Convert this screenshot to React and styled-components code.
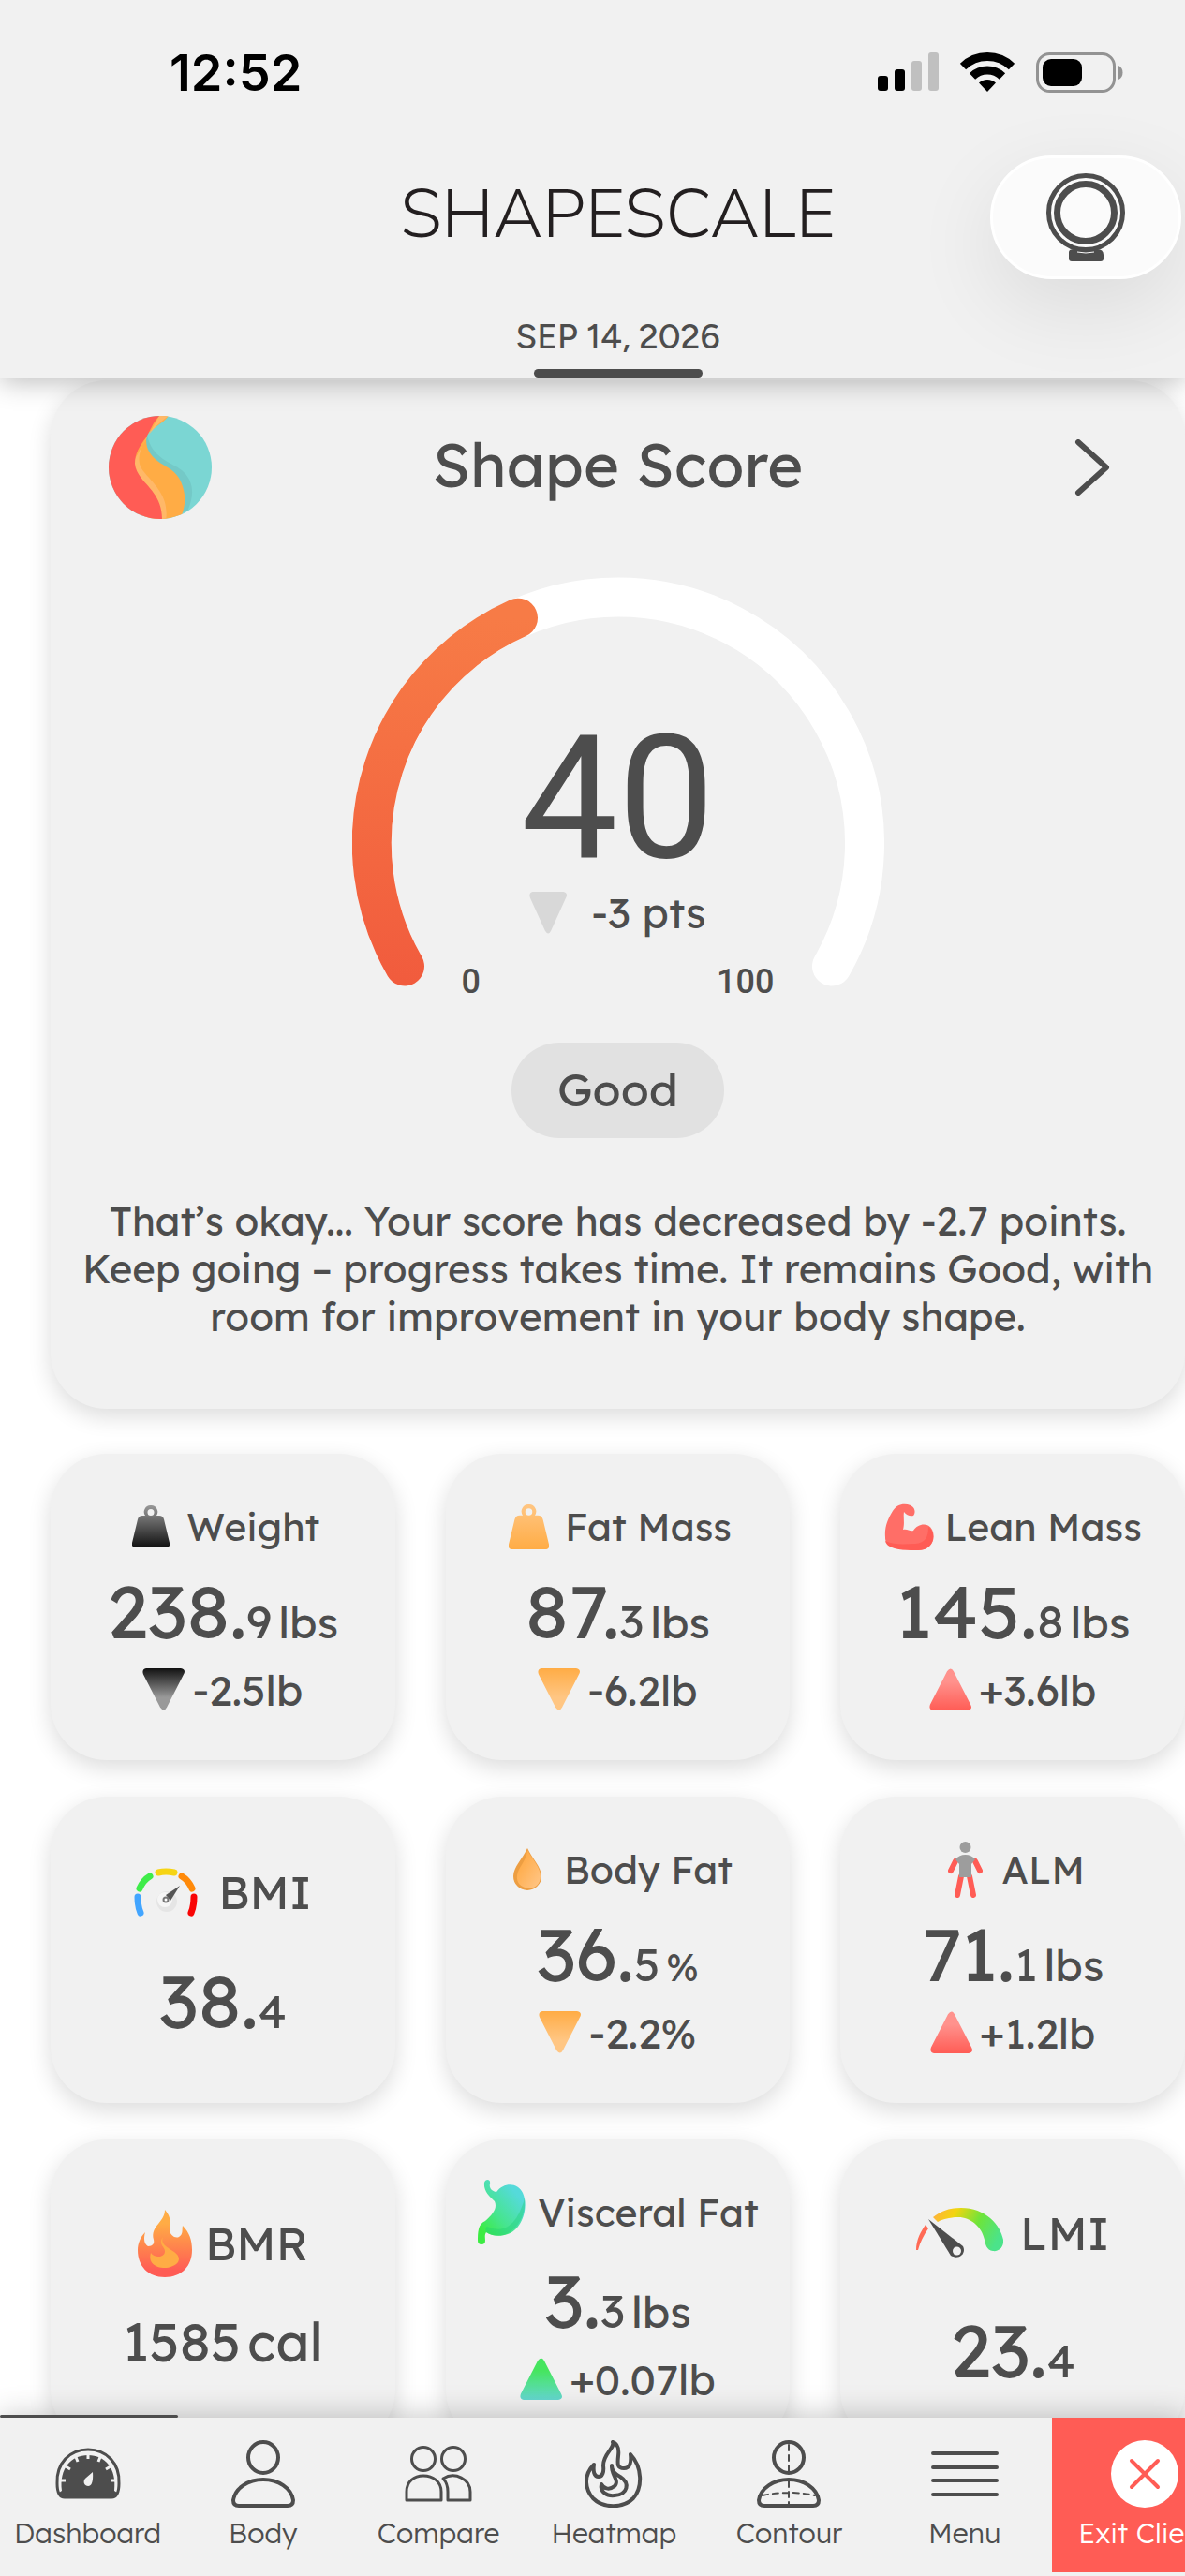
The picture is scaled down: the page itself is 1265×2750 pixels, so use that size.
import React from "react";
import styled, { createGlobalStyle } from "styled-components";

const ink = "#4d4d4d";
const surface = "#f1f1f1";
const coral = "#ff5c55";

const GlobalStyle = createGlobalStyle`
  *, *::before, *::after { box-sizing: border-box; }
  html, body { margin: 0; background: #fff; }
  body {
    color: ${ink};
    font-family: Lexend, Inter, "Open Sans", sans-serif;
    font-weight: 400;
  }
  button { font: inherit; color: inherit; border: 0; padding: 0; background: none; cursor: pointer; }
  h1, h2, h3, p { margin: 0; font-weight: inherit; }
  svg { display: block; flex: none; }
`;

const Screen = styled.div`
  display: flex;
  flex-direction: column;
  height: 100vh;
  overflow: hidden;
`;

const Header = styled.header`
  position: relative;
  z-index: 2;
  flex: none;
  background: ${surface};
  box-shadow: 0 4px 28px rgba(0, 0, 0, 0.28);
`;

const StatusBar = styled.div`
  display: flex;
  align-items: center;
  justify-content: space-between;
  height: 154px;
  padding: 0 66px 0 181px;
  color: #000;
`;

const Clock = styled.time`
  font-family: Inter, sans-serif;
  font-size: 54px;
  font-weight: 600;
`;

const StatusIcons = styled.div`
  display: flex;
  align-items: center;
  gap: 23px;
`;

const TitleRow = styled.div`
  display: grid;
  grid-template-columns: 1fr auto 1fr;
  align-items: center;
  height: 150px;
  padding-left: 54px;
`;

const AppTitle = styled.h1`
  grid-column: 2;
  font-family: "Nunito Sans", Inter, sans-serif;
  font-size: 73px;
  font-weight: 300;
  line-height: 80px;
  color: #231f20;
`;

const DeviceButton = styled.button`
  display: grid;
  place-items: center;
  justify-self: end;
  width: 204px;
  height: 132px;
  margin: 6px 4px 0 0;
  border: 3px solid #fff;
  border-radius: 66px;
  background: #fbfbfb;
  box-shadow: 0 28px 90px rgba(0, 0, 0, 0.09);
`;

const DateTab = styled.div`
  display: flex;
  flex-direction: column;
  align-items: center;
  gap: 17px;
  padding: 37px 0 0 54px;
  font-family: Figtree, Inter, sans-serif;
  font-size: 37px;
  font-weight: 500;
  line-height: 36px;
`;

const TabMarker = styled.span`
  width: 180px;
  height: 9px;
  border-radius: 5px;
  background: ${ink};
`;

const Content = styled.main`
  flex: 1;
  min-height: 0;
  overflow: hidden;
  padding: 3px 0 0 54px;
`;

const Panel = styled.section`
  border-radius: 60px;
  background: ${surface};
  box-shadow: 0 8px 24px rgba(0, 0, 0, 0.14);
`;

const ScoreCard = styled(Panel)`
  display: flex;
  flex-direction: column;
  align-items: center;
  padding: 38px 28px 71px;
  margin-bottom: 48px;
`;

const ScoreHeader = styled.div`
  display: grid;
  grid-template-columns: 1fr auto 1fr;
  align-items: center;
  align-self: stretch;
  height: 110px;
  padding: 0 34px;
  margin-bottom: 62px;
`;

const ScoreTitle = styled.h2`
  padding-bottom: 6px;
  font-size: 65px;
  line-height: 80px;
`;

const Chevron = styled.button`
  display: flex;
  justify-content: flex-end;
  justify-self: end;
  width: 110px;
  padding-right: 18px;
`;

const Gauge = styled.div`
  display: grid;
  justify-items: center;
  width: 568px;
  height: 452px;
  margin-bottom: 45px;

  & > * { grid-area: 1 / 1; }
`;

const GaugeReadout = styled.div`
  display: flex;
  flex-direction: column;
  align-items: center;
  justify-content: flex-end;
`;

const ScoreValue = styled.strong`
  font-family: Roboto, sans-serif;
  font-size: 184px;
  font-weight: 400;
  line-height: 178px;
`;

const ScoreDelta = styled.div`
  display: flex;
  align-items: center;
  gap: 26px;
  height: 50px;
  margin: 8px 0 29px;
  font-size: 45px;
`;

const GaugeRange = styled.div`
  display: flex;
  justify-content: space-between;
  width: 334px;
  font-family: Roboto, sans-serif;
  font-size: 36px;
  font-weight: 500;
  line-height: 40px;
`;

const Rating = styled.span`
  display: grid;
  place-items: center;
  width: 227px;
  height: 102px;
  padding-bottom: 4px;
  margin-bottom: 63px;
  border-radius: 51px;
  background: #e1e1e1;
  font-size: 49px;
`;

const Summary = styled.p`
  padding-bottom: 2px;
  font-size: 42px;
  line-height: 51px;
  text-align: center;
`;

const Metrics = styled.div`
  display: grid;
  grid-template-columns: repeat(3, 1fr);
  grid-auto-rows: 327px;
  gap: 39px 54px;
`;

const MetricCard = styled(Panel).attrs({ as: "article" })`
  display: flex;
  flex-direction: column;
  align-items: center;
  justify-content: center;
  gap: ${(p) => p.$gap}px;
  min-width: 0;
  padding-bottom: 3px;
  white-space: nowrap;
`;

const MetricLabel = styled.h3`
  display: flex;
  align-items: center;
  gap: ${(p) => p.$gap}px;
  height: ${(p) => p.$height}px;
  font-size: ${(p) => (p.$large ? 49 : 41)}px;
`;

const IconBox = styled.span`
  display: grid;
  place-items: center;
  min-width: ${(p) => (p.$large ? 0 : 53)}px;
`;

const Value = styled.p`
  display: flex;
  align-items: baseline;
  height: 77px;
  font-size: 79px;
  line-height: 77px;
`;

const Fraction = styled.span`
  font-size: 49px;
`;

const Unit = styled.span`
  margin-left: 7px;
  font-size: ${(p) => p.$size}px;
`;

const WholeValue = styled.span`
  font-size: 57px;
`;

const Delta = styled.p`
  display: flex;
  align-items: center;
  gap: 8px;
  height: 52px;
  font-size: 45px;
`;

const NavShell = styled.div`
  position: relative;
  z-index: 2;
  flex: none;
  padding-bottom: 4px;
  background: ${surface};
  box-shadow: 0 -2px 30px rgba(0, 0, 0, 0.22);
`;

const ActiveMarker = styled.span`
  position: absolute;
  left: 0;
  bottom: 100%;
  width: 15%;
  height: 3px;
  border-radius: 2px;
  background: ${ink};
`;

const Nav = styled.nav`
  display: flex;
  overflow: hidden;
`;

const NavItem = styled.button`
  display: flex;
  flex: 0 0 ${(p) => (p.$danger ? "15.6%" : "14.8%")};
  flex-direction: column;
  align-items: center;
  gap: 9px;
  height: 165px;
  padding-top: 24px;
  color: ${(p) => (p.$danger ? "#fff" : ink)};
  background: ${(p) => (p.$danger ? coral : "transparent")};
  font-size: 30px;
  font-weight: 300;
  line-height: 36px;
  white-space: nowrap;
`;

const ICON = { fill: "none", stroke: ink, strokeWidth: 4, strokeLinecap: "round", strokeLinejoin: "round" };

const SignalIcon = () => (
  <svg width="65" height="42" viewBox="0 0 65 42" aria-label="Signal">
    <rect x="0" y="25" width="11" height="16" rx="3" />
    <rect x="18" y="18" width="11" height="23" rx="3" />
    <rect x="36" y="9" width="11" height="32" rx="3" fill="#c0c0c0" />
    <rect x="54" y="0" width="11" height="41" rx="3" fill="#c0c0c0" />
  </svg>
);

const WifiIcon = () => (
  <svg width="58" height="42" viewBox="0 0 58 42" aria-label="Wi-Fi">
    <path d="M3 15A37.500 37.500 0 0 1 55 15M13 25.500A23 23 0 0 1 45 25.500" fill="none" stroke="#000" strokeWidth="9" />
    <path d="M20 32.600A13 13 0 0 1 38 32.600L29 42Z" />
  </svg>
);

const BatteryIcon = () => (
  <svg width="93" height="43" viewBox="0 0 93 43" aria-label="Battery">
    <rect x="1.500" y="1.500" width="82" height="40" rx="13" fill="none" stroke="#939393" strokeWidth="3" />
    <rect x="7" y="7" width="42" height="29" rx="9" />
    <path d="M88 14C94 16 94 27 88 29Z" fill="#939393" />
  </svg>
);

const DeviceIcon = () => (
  <svg width="84" height="94" viewBox="0 0 84 94" aria-hidden="true">
    <path d="M24 84Q24 81 30 81H54Q61 81 61 87V91Q61 94 58 94H27Q24 94 24 91Z" fill={ink} />
    <circle cx="42" cy="42" r="39.500" fill="#fbfbfb" stroke={ink} strokeWidth="5" />
    <circle cx="42" cy="42" r="30.500" fill="none" stroke={ink} strokeWidth="7" />
    <path d="M33 84Q42 86 51 84" fill="none" stroke="#fbfbfb" strokeWidth="1" />
  </svg>
);

const ShapeLogo = () => (
  <svg width="110" height="110" viewBox="0 0 110 110" aria-hidden="true">
    <clipPath id="logo-disc"><circle cx="55" cy="55" r="55" /></clipPath>
    <g clipPath="url(#logo-disc)">
      <rect width="110" height="110" fill="#7bd6d3" />
      <path d="M41 20C46 46 67 49 78 58C91 69 92 84 84 102L70 104L36 40Z" fill="#74c9c7" />
      <path d="M54 0H64C56 10 47 12 41 20C38 32 43 41 52 48C61 55 71 57 77 70C82 82 83 92 78 106L55 112L28 60V20Z" fill="#ffac45" />
      <path d="M54 0H64C50 10 45 17 40 24C33 36 30 48 35 56C43 69 66 83 61 112H40L20 60Z" fill="#ffb868" />
      <path d="M54 0C46 9 45 15 40 23C33 32 28 40 28 51C30 72 58 78 57 112H0V0Z" fill={coral} />
    </g>
  </svg>
);

const GaugeArc = () => (
  <svg width="568" height="438" viewBox="0 0 568 438" fill="none" strokeWidth="42" strokeLinecap="round" aria-hidden="true">
    <defs>
      <linearGradient id="gauge-fill" x1="0" y1="44" x2="0" y2="438" gradientUnits="userSpaceOnUse">
        <stop offset="0" stopColor="#f77b46" />
        <stop offset="1" stopColor="#f15b3d" />
      </linearGradient>
    </defs>
    <path d="M56 415.500A263 263 0 1 1 512 415.500" stroke="#fff" />
    <path d="M56 415.500A263 263 0 0 1 177 43.700" stroke="url(#gauge-fill)" />
  </svg>
);

const tones = {
  dark: ["#111", "#999"],
  amber: ["#ffac45", "#ffc683"],
  red: [coral, "#ff928d"],
  green: ["#64d8d0", "#46e55f"],
  grey: ["#d8d8d8", "#d8d8d8"],
};

const Triangle = ({ tone, up, width = 45 }) => {
  const id = `trend-${tone}`;
  return (
    <svg width={width} height="45" viewBox="0 0 45 41" preserveAspectRatio="none" aria-hidden="true">
      <linearGradient id={id} x1="0" y1="0" x2="0" y2="1">
        <stop offset="0" stopColor={tones[tone][0]} />
        <stop offset="0.7" stopColor={tones[tone][1]} />
      </linearGradient>
      <path
        d="M4 0H41Q47 1 44 6L26 38Q23 43 19 38L1 6Q-1 1 4 0Z"
        fill={`url(#${id})`}
        transform={up ? "matrix(1 0 0 -1 0 41)" : undefined}
      />
    </svg>
  );
};

const KettleIcon = ({ tone, size }) => (
  <svg width={size} height={size + 5} viewBox="0 0 40 45" preserveAspectRatio="none" aria-hidden="true">
    <linearGradient id={`kettle-${tone}`} x1="0" y1="1" x2="0" y2="0">
      <stop offset="0" stopColor={tones[tone][0]} />
      <stop offset="1" stopColor={tones[tone][1]} />
    </linearGradient>
    <path
      fillRule="evenodd"
      fill={`url(#kettle-${tone})`}
      d="M20 0A7 7 0 0 1 26 11H29Q33 11 34 15L40 40Q41 45 36 45H4Q-1 45 0 40L6 15Q7 11 11 11H14A7 7 0 0 1 20 0ZM20 4A3.500 3.500 0 1 0 20 11A3.500 3.500 0 1 0 20 4Z"
    />
  </svg>
);

const ArmIcon = () => (
  <svg width="53" height="50" viewBox="0 0 53 50" aria-hidden="true">
    <path d="M1 36C0 25 4 16 9 8C13 1 21-1 28 2C34 5 33 11 31 13C28 14 24 13 21 9C20 15 22 20 20 28C25 27 27 30 31 29C36 21 47 20 51 28C56 39 49 50 36 50C24 50 0 50 1 36Z" fill="#ff6e67" />
    <path d="M1 40C12 45 23 43 33 43C44 42 47 36 47 25C56 31 54 50 36 50C23 50 3 50 1 40Z" fill={coral} />
  </svg>
);

const BmiIcon = () => (
  <svg width="68" height="52" viewBox="0 0 68 52" fill="none" strokeWidth="7" strokeLinecap="round" aria-hidden="true">
    <path d="M4 31Q4 41 7 48" stroke="#42a5ff" />
    <path d="M6 22Q10 13 17 9" stroke="#3fec4a" />
    <path d="M26 5Q34 3 43 5" stroke="#f6d414" />
    <path d="M51 9Q58 13 62 22" stroke="#ff8a0a" />
    <path d="M64 31Q64 41 61 48" stroke="#f90505" />
    <circle cx="35" cy="36" r="11" fill="#e5e5e5" />
    <circle cx="33" cy="34" r="8" fill="#f6f6f6" />
    <path d="M49 19L34 29L39 35Z" fill="#555" />
    <circle cx="34" cy="34" r="2.500" fill="#fff" stroke="#777" strokeWidth="2" />
  </svg>
);

const DropIcon = () => (
  <svg width="30" height="45" viewBox="0 0 30 45" aria-hidden="true">
    <linearGradient id="drop" x1="0" y1="0" x2="1" y2="1">
      <stop offset="0.2" stopColor="#ffab47" />
      <stop offset="1" stopColor="#ffc78a" />
    </linearGradient>
    <path d="M15 0C20 11 30 20 30 30A15 15 0 0 1 0 30C0 20 10 11 15 0Z" fill="#ed9e42" />
    <path d="M15 2C21 13 29 21 29 30C29 38 23 43 17 43C8 42 3 37 4 29C5 20 14 14 15 2Z" fill="url(#drop)" />
  </svg>
);

const FigureIcon = () => (
  <svg width="37" height="60" viewBox="0 0 37 60" aria-hidden="true">
    <ellipse cx="18.500" cy="6" rx="6" ry="6" fill="#9d9d9d" />
    <path d="M8 21L3 31M29 21L34 31" stroke={coral} strokeWidth="6" strokeLinecap="round" />
    <path d="M14 37L10 57M23 37L27 57" stroke={coral} strokeWidth="6" strokeLinecap="round" />
    <path d="M8 19Q12 14 18.500 14T29 19L25 24V38H12V24Z" fill="#9d9d9d" />
  </svg>
);

const FlameIcon = () => (
  <svg width="58" height="72" viewBox="0 0 58 72" aria-hidden="true">
    <linearGradient id="flame" x1="0" y1="0" x2="0" y2="1">
      <stop offset="0.2" stopColor="#ffac45" />
      <stop offset="0.9" stopColor={coral} />
    </linearGradient>
    <path d="M29 0C37 9 34 15 34 21C34 27 40 31 44 29C49 26 47 21 48 17C55 24 58 32 58 43C58 60 47 72 29 72S0 60 0 43C0 36 3 29 8 24C6 31 7 37 11 39C16 39 18 36 17 32C13 17 29 14 29 0Z" fill="url(#flame)" />
    <path d="M27 29C24 36 30 39 39 45C51 54 39 62 29 62C18 62 11 56 14 46C17 51 28 52 29 45C30 40 21 37 27 29Z" fill="#ffac45" />
  </svg>
);

const StomachIcon = () => (
  <svg width="51" height="69" viewBox="0 0 51 69" aria-hidden="true">
    <linearGradient id="stomach" x1="0.8" y1="0.2" x2="0.1" y2="1">
      <stop offset="0" stopColor="#55dada" />
      <stop offset="0.5" stopColor="#46e58d" />
      <stop offset="0.85" stopColor="#3cec43" />
    </linearGradient>
    <path d="M7 3C8-1 14-1 13 4C12 8 14 12 20 13C28 2 43 3 48 14C55 30 47 53 32 58C24 61 14 60 9 56C7 59 8 62 8 65Q8 69 4 69Q0 69 0 65C0 57 0 47 8 44C17 36 21 30 18 23C12 17 6 12 7 3Z" fill="url(#stomach)" />
    <path d="M50 20C52 38 42 54 28 59C20 61 13 59 9 56C8 53 8 51 10 50C33 60 44 41 50 20Z" fill="#20cf76" opacity="0.4" />
  </svg>
);

const LmiIcon = () => (
  <svg width="93" height="53" viewBox="0 0 93 53" aria-hidden="true">
    <linearGradient id="lmi" x1="18" y1="0" x2="86" y2="36" gradientUnits="userSpaceOnUse">
      <stop offset="0" stopColor="#ffac45" />
      <stop offset="0.3" stopColor="#f3d50f" />
      <stop offset="0.65" stopColor="#6de43b" />
      <stop offset="1" stopColor="#4be38a" />
    </linearGradient>
    <path d="M0 45C0 34 5 25 10 18L13 22C8 29 4 37 2 45Z" fill="#ff6a55" />
    <path d="M18 10C28 2 38 0 48 0C74 0 90 18 93 34C94 43 87 47 82 46C75 45 74 39 73 34C70 20 58 10 45 10C36 10 28 12 23 15Z" fill="url(#lmi)" />
    <path d="M13 12L50 41C54 49 45 56 37 51Z" fill={ink} />
    <circle cx="43.500" cy="46" r="4.500" fill={surface} />
  </svg>
);

const DashboardIcon = () => (
  <svg width="72" height="72" viewBox="0 0 72 72" aria-hidden="true">
    <path d="M3 46C2 25 16 10 36 10S70 25 69 46C69 54 67 61 61 61H11C5 61 3 54 3 46Z" fill="none" stroke={ink} strokeWidth="3" />
    <path d="M8 54C5 30 18 16 36 16S67 30 64 54L67 56Q65 62 60 62H12Q7 62 5 56Z" fill={ink} />
    <path d="M36 15V20M23 18L25 23M49 18L47 23M12 28L17 31M60 28L55 31M7 43H12M65 43H60" stroke={surface} strokeWidth="3" />
    <path d="M41 34Q42 49 36 49C30 48 31 42 34 40Z" fill={surface} />
  </svg>
);

const BodyIcon = () => (
  <svg width="72" height="72" viewBox="0 0 72 72" {...ICON} aria-hidden="true">
    <ellipse cx="36" cy="18.500" rx="16" ry="16.500" />
    <path d="M4 64C6 51 20 42 36 42S66 51 68 64Q68 70 62 70H10Q4 70 4 64Z" />
  </svg>
);

const CompareIcon = () => (
  <svg width="72" height="72" viewBox="0 0 72 72" {...ICON} strokeWidth="3" aria-hidden="true">
    <circle cx="20" cy="20" r="12.500" />
    <circle cx="52" cy="20" r="12.500" />
    <path d="M2 64V55C2 44 10 38 20 38S39 44 39 55V64Z" />
    <path d="M41 41C54 33 70 42 70 55V64H46V55Q46 46 41 41Z" />
  </svg>
);

const HeatmapIcon = () => (
  <svg width="72" height="72" viewBox="0 0 72 72" {...ICON} aria-hidden="true">
    <path d="M35 2C38 8 25 14 25 27C26 34 24 39 20 39C15 39 14 33 15 26C3 38 6 53 14 62C25 73 46 73 57 62C67 51 67 29 54 15C55 23 54 30 47 30C40 30 40 26 41 17C42 9 41 4 35 2Z" />
    <path d="M34 27C33 37 43 43 37 49C31 54 25 51 23 47C21 55 29 60 37 59C51 58 54 46 43 39C37 36 34 33 34 27Z" />
  </svg>
);

const ContourIcon = () => (
  <svg width="72" height="72" viewBox="0 0 72 72" {...ICON} aria-hidden="true">
    <ellipse cx="36" cy="18.500" rx="16" ry="16.500" />
    <path d="M4 64C6 51 20 42 36 42S66 51 68 64Q68 70 62 70H10Q4 70 4 64Z" />
    <path d="M36 5V34M36 44V68M8 59Q36 53 64 59" strokeWidth="2" strokeDasharray="6 5" />
  </svg>
);

const MenuIcon = () => (
  <svg width="72" height="72" viewBox="0 0 72 72" {...ICON} aria-hidden="true">
    <path d="M2 14H70M2 29H70M2 43H70M2 58H70" />
  </svg>
);

const ExitIcon = () => (
  <svg width="72" height="72" viewBox="0 0 72 72" aria-hidden="true">
    <circle cx="36" cy="36" r="36" fill="#fff" />
    <path d="M22 22L50 50M50 22L22 50" stroke={coral} strokeWidth="4" strokeLinecap="round" />
  </svg>
);

const metrics = [
  { label: "Weight", icon: <KettleIcon tone="dark" size={40} />, whole: "238.", fraction: "9", unit: "lbs", delta: "-2.5lb", tone: "dark" },
  { label: "Fat Mass", icon: <KettleIcon tone="amber" size={43} />, whole: "87.", fraction: "3", unit: "lbs", delta: "-6.2lb", tone: "amber" },
  { label: "Lean Mass", icon: <ArmIcon />, whole: "145.", fraction: "8", unit: "lbs", delta: "+3.6lb", tone: "red", up: true },
  { label: "BMI", icon: <BmiIcon />, large: true, iconGap: 22, labelHeight: 66, gap: 44, whole: "38.", fraction: "4" },
  { label: "Body Fat", icon: <DropIcon />, whole: "36.", fraction: "5", unit: "%", unitSize: 41, delta: "-2.2%", tone: "amber" },
  { label: "ALM", icon: <FigureIcon />, whole: "71.", fraction: "1", unit: "lbs", delta: "+1.2lb", tone: "red", up: true },
  { label: "BMR", icon: <FlameIcon />, large: true, iconGap: 14, labelHeight: 80, gap: 26, whole: "1585", unit: "cal", unitSize: 57 },
  { label: "Visceral Fat", icon: <StomachIcon />, labelHeight: 70, whole: "3.", fraction: "3", unit: "lbs", delta: "+0.07lb", tone: "green", up: true },
  { label: "LMI", icon: <LmiIcon />, large: true, iconGap: 18, labelHeight: 77, gap: 48, whole: "23.", fraction: "4" },
];

const navItems = [
  { label: "Dashboard", Icon: DashboardIcon },
  { label: "Body", Icon: BodyIcon },
  { label: "Compare", Icon: CompareIcon },
  { label: "Heatmap", Icon: HeatmapIcon },
  { label: "Contour", Icon: ContourIcon },
  { label: "Menu", Icon: MenuIcon },
  { label: "Exit Client", Icon: ExitIcon, danger: true },
];

const Metric = ({ m }) => (
  <MetricCard $gap={m.gap ?? 20}>
    <MetricLabel $gap={m.iconGap ?? 12} $height={m.labelHeight ?? 62} $large={m.large}>
      <IconBox $large={m.large}>{m.icon}</IconBox>
      {m.label}
    </MetricLabel>
    <Value>
      {m.fraction ? m.whole : <WholeValue>{m.whole}</WholeValue>}
      {m.fraction && <Fraction>{m.fraction}</Fraction>}
      {m.unit && <Unit $size={m.unitSize ?? 47}>{m.unit}</Unit>}
    </Value>
    {m.delta && (
      <Delta>
        <Triangle tone={m.tone} up={m.up} />
        {m.delta}
      </Delta>
    )}
  </MetricCard>
);

export default function App() {
  return (
    <Screen>
      <GlobalStyle />
      <Header>
        <StatusBar>
          <Clock>12:52</Clock>
          <StatusIcons>
            <SignalIcon />
            <WifiIcon />
            <BatteryIcon />
          </StatusIcons>
        </StatusBar>
        <TitleRow>
          <AppTitle>SHAPESCALE</AppTitle>
          <DeviceButton aria-label="Device"><DeviceIcon /></DeviceButton>
        </TitleRow>
        <DateTab>
          <time dateTime="2026-09-14">SEP 14, 2026</time>
          <TabMarker />
        </DateTab>
      </Header>

      <Content>
        <ScoreCard>
          <ScoreHeader>
            <ShapeLogo />
            <ScoreTitle>Shape Score</ScoreTitle>
            <Chevron aria-label="Open Shape Score">
              <svg width="38" height="60" viewBox="0 0 38 60" {...ICON} strokeWidth="6">
                <path d="M4 3L34 30L4 57" />
              </svg>
            </Chevron>
          </ScoreHeader>
          <Gauge>
            <GaugeArc />
            <GaugeReadout>
              <ScoreValue>40</ScoreValue>
              <ScoreDelta><Triangle tone="grey" width={40} />-3 pts</ScoreDelta>
              <GaugeRange><span>0</span><span>100</span></GaugeRange>
            </GaugeReadout>
          </Gauge>
          <Rating>Good</Rating>
          <Summary>
            That’s okay... Your score has decreased by -2.7 points.<br />
            Keep going – progress takes time. It remains Good, with<br />
            room for improvement in your body shape.
          </Summary>
        </ScoreCard>
        <Metrics>
          {metrics.map((m) => <Metric key={m.label} m={m} />)}
        </Metrics>
      </Content>

      <NavShell>
        <ActiveMarker />
        <Nav>
          {navItems.map(({ label, Icon, danger }) => (
            <NavItem key={label} $danger={danger}>
              <Icon />
              {label}
            </NavItem>
          ))}
        </Nav>
      </NavShell>
    </Screen>
  );
}
